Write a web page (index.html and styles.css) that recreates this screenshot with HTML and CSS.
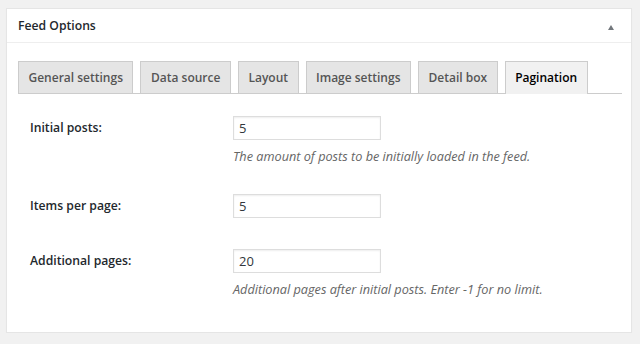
FILE: index.html
```html
<!DOCTYPE html>
<html>
  <head>
    <title>Feed Options</title>
    <link rel="stylesheet" href="styles.css">
  </head>
  <body>
    <div class="postbox">
      <div class="postbox-header">
        <h2>Feed Options</h2>
        <span class="toggle-arrow"></span>
      </div>
      <div class="inside">
        <ul class="tabs">
          <li class="tab">General settings</li>
          <li class="tab">Data source</li>
          <li class="tab">Layout</li>
          <li class="tab">Image settings</li>
          <li class="tab">Detail box</li>
          <li class="tab active">Pagination</li>
        </ul>
        <div class="form-table">
          <div class="row">
            <label class="field-label">Initial posts:</label>
            <div class="field">
              <input type="text" value="5">
              <p class="description">The amount of posts to be initially loaded in the feed.</p>
            </div>
          </div>
          <div class="row">
            <label class="field-label">Items per page:</label>
            <div class="field">
              <input type="text" value="5">
            </div>
          </div>
          <div class="row">
            <label class="field-label">Additional pages:</label>
            <div class="field">
              <input type="text" value="20">
              <p class="description">Additional pages after initial posts. Enter -1 for no limit.</p>
            </div>
          </div>
        </div>
      </div>
    </div>
  </body>
</html>
```

FILE: styles.css
```css
/* metabox styles */
body {
  margin: 0;
  padding: 8px 8px 0 6px;
  background-color: #f1f1f1;
  font-family: "Open Sans", "Noto Sans", sans-serif;
  font-size: 13px;
  color: #23282d;
}
.postbox {
  background-color: #fff;
  border: 1px solid #e5e5e5;
  box-shadow: 0 1px 1px rgba(0, 0, 0, 0.04);
  height: 323px;
}
.postbox-header {
  display: flex;
  align-items: center;
  justify-content: space-between;
  height: 33px;
  padding: 0 17px 0 11px;
  border-bottom: 1px solid #eee;
}
.postbox-header h2 {
  margin: 0;
  font-size: 12.2px;
  font-weight: 600;
}
.toggle-arrow {
  width: 0;
  height: 0;
  border-left: 3px solid transparent;
  border-right: 3px solid transparent;
  border-bottom: 5px solid #72777c;
  margin-top: 4px;
}
.inside {
  padding: 18px 9px 0 11px;
}
.tabs {
  list-style: none;
  margin: 0;
  padding: 0;
  display: flex;
  gap: 7px;
  border-bottom: 1px solid #ccc;
}
.tab {
  flex: none;
  white-space: nowrap;
  background-color: #e5e5e5;
  border: 1px solid #ccc;
  border-bottom: none;
  padding: 0 9.5px;
  height: 31px;
  line-height: 31px;
  font-weight: 600;
  color: #555;
  font-size: 12px;
}
.tab.active {
  background-color: #f1f1f1;
  color: #000;
  margin-bottom: -1px;
  height: 32px;
}
.form-table {
  padding: 22px 0 0 12px;
}
.row {
  display: flex;
  min-height: 78px;
}
.row:nth-child(2) {
  min-height: 55px;
}
.field-label {
  width: 203px;
  font-weight: 600;
  line-height: 24px;
  font-size: 12.2px;
}
.field input {
  width: 148px;
  height: 24px;
  box-sizing: border-box;
  border: 1px solid #ddd;
  box-shadow: inset 0 1px 2px rgba(0, 0, 0, 0.07);
  padding: 0 5px;
  font-family: inherit;
  font-size: 13px;
  color: #32373c;
  display: block;
}
.description {
  margin: 7px 0 0 0;
  font-style: italic;
  color: #666;
  font-size: 12.7px;
}
```
